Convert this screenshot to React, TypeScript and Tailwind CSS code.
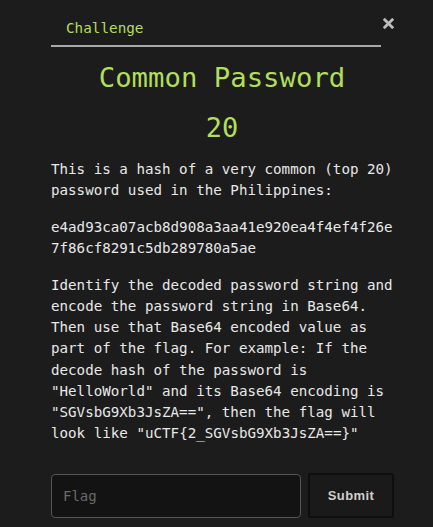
import React from "react";

export default function App() {
  const mono = { fontFamily: '"DejaVu Sans Mono", monospace' };
  return (
    <div
      className="w-[433px] h-[527px] bg-[#1c1c1c] overflow-hidden text-[#e8e8e8]"
      style={mono}
    >
      <div className="pl-[51px] w-[400px]">
        <div className="relative">
          <div className="w-[330px] border-b-2 border-[#a8a8a8] pt-[18px] pb-[6px] pl-[15px] text-[14.3px] leading-[21.2px] text-[#b2df5a]">
            Challenge
          </div>
          <button className="absolute left-[332px] top-[18px] w-[11px] h-[11px] flex items-center justify-center">
            <svg width="11" height="11" viewBox="0 0 11 11">
              <path
                d="M1.8 1.8 L9.2 9.2 M9.2 1.8 L1.8 9.2"
                stroke="#bdbdbd"
                strokeWidth="2.8"
                strokeLinecap="square"
              />
            </svg>
          </button>
        </div>
        <div className="w-[342px] text-center mt-[15px] text-[27.3px] leading-[32px] text-[#b2df5a]">
          Common Password
        </div>
        <div className="w-[342px] text-center mt-[17.5px] text-[27px] leading-[32px] text-[#b2df5a]">
          20
        </div>
        <div className="w-[348px] text-[14.2px] leading-[21.2px]">
          <p className="mt-[15.3px]">
            This is a hash of a very common (top 20) password used in the
            Philippines:
          </p>
          <p className="mt-[15.5px] break-all">
            e4ad93ca07acb8d908a3aa41e920ea4f4ef4f26e7f86cf8291c5db289780a5ae
          </p>
          <p className="mt-[15.5px]">
            Identify the decoded password string and encode the password string
            in Base64. Then use that Base64 encoded value as part of the flag.
            For example: If the decode hash of the password is "HelloWorld" and
            its Base64 encoding is "SGVsbG9Xb3JsZA==", then the flag will look
            like "uCTF{"{"}2_SGVsbG9Xb3JsZA=={"}"}"
          </p>
        </div>
        <div className="flex gap-[7px] mt-[30px] w-[343px]">
          <input
            placeholder="Flag"
            className="w-[250px] h-[44px] rounded-[4px] border border-[#555555] bg-[#131313] px-[11px] text-[14px] text-[#e8e8e8] placeholder:text-[#6a6a6a] outline-none"
            style={mono}
          />
          <button
            className="w-[86px] h-[45px] -mt-[1px] rounded-[2px] border-2 border-[#0e0e0e] bg-[#1a1a1a] text-[13px] font-bold tracking-[0.4px] text-[#cfcfcf]"
            style={{ fontFamily: '"Liberation Sans", Arial, sans-serif' }}
          >
            Submit
          </button>
        </div>
      </div>
    </div>
  );
}
